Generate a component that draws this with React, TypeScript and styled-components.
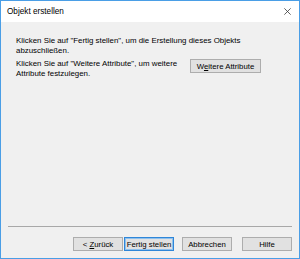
import styled, { createGlobalStyle, css } from "styled-components";

const GlobalStyle = createGlobalStyle`
  html, body {
    margin: 0;
    padding: 0;
    background: #ffffff;
  }
  * {
    box-sizing: border-box;
  }
`;

const Window = styled.div`
  width: 300px;
  height: 259px;
  display: flex;
  flex-direction: column;
  border: 1px solid #4a9ee6;
  background: #f0f0f0;
  font-family: "Liberation Sans", Arial, sans-serif;
  color: #000000;
`;

const TitleBar = styled.div`
  height: 21px;
  flex: none;
  display: flex;
  align-items: center;
  justify-content: space-between;
  background: #ffffff;
  padding: 0 8px 0 6px;
`;

const Title = styled.span`
  font-size: 8.2px;
  color: #000000;
`;

const CloseIcon = styled.svg`
  width: 7px;
  height: 7px;
  display: block;
`;

const Body = styled.div`
  flex: 1;
  padding: 14px 15px 0 15px;
  display: flex;
  flex-direction: column;
  gap: 3px;
  font-size: 7.9px;
  line-height: 10px;
`;

const Paragraph = styled.p<{ $width?: number }>`
  margin: 0;
  width: ${(p) => (p.$width ? `${p.$width}px` : "auto")};
`;

const Row = styled.div`
  display: flex;
  align-items: flex-start;
  gap: 4px;
`;

const Button = styled.button<{ $default?: boolean; $width?: number }>`
  width: ${(p) => p.$width ?? 50}px;
  height: 14px;
  padding: 0;
  margin: 0;
  background: #e1e1e1;
  border: 1px solid #adadad;
  font-family: "Liberation Sans", Arial, sans-serif;
  font-size: 7.8px;
  color: #000000;
  display: flex;
  align-items: center;
  justify-content: center;
  white-space: nowrap;
  ${(p) =>
    p.$default &&
    css`
      border: 1px solid #2f86d8;
      box-shadow: inset 0 0 0 1px #8fc1ee;
    `}
`;

const Footer = styled.div`
  flex: none;
  padding: 0 7px 7px 7px;
`;

const Separator = styled.div`
  height: 1px;
  background: #a8a8a8;
  margin-bottom: 10px;
`;

const ButtonRow = styled.div`
  display: flex;
  justify-content: flex-end;
  align-items: center;
`;

const Gap = styled.div<{ $w: number }>`
  width: ${(p) => p.$w}px;
  flex: none;
`;

export default function App() {
  return (
    <>
      <GlobalStyle />
      <Window>
        <TitleBar>
          <Title>Objekt erstellen</Title>
          <CloseIcon viewBox="0 0 10 10">
            <path d="M0.5 0.5 L9.5 9.5 M9.5 0.5 L0.5 9.5" stroke="#333" strokeWidth="1.1" />
          </CloseIcon>
        </TitleBar>
        <Body>
          <Paragraph $width={240}>
            Klicken Sie auf "Fertig stellen", um die Erstellung dieses Objekts
            abzuschließen.
          </Paragraph>
          <Row>
            <Paragraph $width={170}>
              Klicken Sie auf "Weitere Attribute", um weitere Attribute festzulegen.
            </Paragraph>
            <Button $width={71}>
              <span>
                W<u>e</u>itere Attribute
              </span>
            </Button>
          </Row>
        </Body>
        <Footer>
          <Separator />
          <ButtonRow>
            <Button>
              <span>
                &lt; <u>Z</u>urück
              </span>
            </Button>
            <Gap $w={1} />
            <Button $default>Fertig stellen</Button>
            <Gap $w={8} />
            <Button>Abbrechen</Button>
            <Gap $w={10} />
            <Button>Hilfe</Button>
          </ButtonRow>
        </Footer>
      </Window>
    </>
  );
}
